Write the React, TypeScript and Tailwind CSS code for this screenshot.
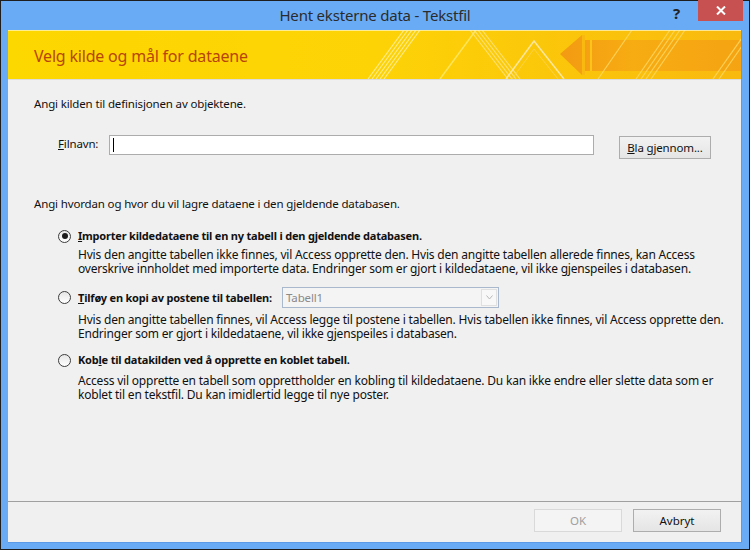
import React from "react";

function Radio({ checked }: { checked?: boolean }) {
  return (
    <span className="w-[13px] h-[13px] rounded-full border border-[#3c3c3c] bg-gradient-to-b from-[#e6e6e6] to-white flex items-center justify-center shrink-0">
      {checked && <span className="w-[6px] h-[6px] rounded-full bg-[#1a1a1a]" />}
    </span>
  );
}

function HeaderArt() {
  return (
    <svg width="734" height="49" viewBox="0 0 734 49" className="absolute inset-0">
      <defs>
        <linearGradient id="bg" x1="0" y1="0" x2="1" y2="0">
          <stop offset="0" stopColor="#fdd700" />
          <stop offset="0.5" stopColor="#fdd306" />
          <stop offset="1" stopColor="#f9b90f" />
        </linearGradient>
        <linearGradient id="arrow" x1="0" y1="0" x2="1" y2="0">
          <stop offset="0" stopColor="#f39a13" />
          <stop offset="0.4" stopColor="#f7ac12" />
          <stop offset="1" stopColor="#f5a312" />
        </linearGradient>
      </defs>
      <rect width="734" height="49" fill="url(#bg)" />
      {/* left fan of light stripes */}
      <g stroke="#fff0a0" strokeWidth="1.2" opacity="0.85">
        <line x1="360" y1="49" x2="396" y2="0" />
        <line x1="364" y1="49" x2="400" y2="0" />
        <line x1="368" y1="49" x2="404" y2="0" />
        <line x1="372" y1="49" x2="408" y2="0" />
        <line x1="376" y1="49" x2="412" y2="0" />
      </g>
      <line x1="432" y1="49" x2="468" y2="0" stroke="#ffe55a" strokeWidth="1.5" />
      {/* backslash stripes */}
      <g stroke="#fde37a" strokeWidth="1.2" opacity="0.9">
        <line x1="462" y1="0" x2="500" y2="49" />
        <line x1="466" y1="0" x2="504" y2="49" />
        <line x1="470" y1="0" x2="508" y2="49" />
        <line x1="474" y1="0" x2="512" y2="49" />
      </g>
      {/* chevron */}
      <polyline points="498,49 526,11 556,49" fill="none" stroke="#fde6a0" strokeWidth="1.5" />
      <polyline points="504,49 526,19 550,49" fill="none" stroke="#fcd96a" strokeWidth="1" opacity="0.6" />
      {/* arrow */}
      <polygon points="552,24 574,5 574,10 734,10 734,41 574,41 574,45" fill="url(#arrow)" />
      <rect x="574" y="5" width="3" height="40" fill="#f9b90f" />
      <rect x="582" y="10" width="2" height="31" fill="#fbc41a" />
      {/* right stripes */}
      <g stroke="#fdd860" strokeWidth="1.2" opacity="0.85">
        <line x1="590" y1="49" x2="624" y2="0" />
        <line x1="628" y1="49" x2="662" y2="0" />
        <line x1="633" y1="49" x2="667" y2="0" />
        <line x1="638" y1="49" x2="672" y2="0" />
        <line x1="643" y1="49" x2="677" y2="0" />
        <line x1="705" y1="49" x2="734" y2="8" />
        <line x1="711" y1="49" x2="734" y2="16" />
      </g>
      <line x1="0" y1="0" x2="734" y2="0" stroke="#fff6c0" strokeWidth="1.5" />
    </svg>
  );
}

export default function App() {
  const font = "font-['Noto_Sans','Liberation_Sans',sans-serif]";
  return (
    <div className={`w-[750px] h-[550px] bg-[#6aabf5] border border-[#1e1e1e] flex flex-col ${font}`}>
      {/* Title bar */}
      <div className="h-[29px] relative flex items-center justify-center shrink-0">
        <span className="text-[15px] text-[#2b2b2b] -mt-[1px] tracking-[-0.2px]">Hent eksterne data - Tekstfil</span>
        <span className="absolute left-[672px] top-[1px] text-[15px] font-bold text-[#222]">?</span>
        <div className="absolute left-[697px] top-[-1px] w-[45px] h-[21px] bg-[#c75050] flex items-center justify-center">
          <svg width="10" height="9" viewBox="0 0 10 9">
            <path d="M1 0.5 L9 8.5 M9 0.5 L1 8.5" stroke="#fff" strokeWidth="2" />
          </svg>
        </div>
      </div>

      {/* Client area */}
      <div className="mx-[7px] mb-[6px] flex-1 bg-[#f0f0f0] flex flex-col border-r border-b border-[#5b9ae6]">
        {/* Banner */}
        <div className="h-[49px] relative shrink-0 overflow-hidden">
          <HeaderArt />
          <div className="relative pl-[26px] pt-[14px] text-[16px] tracking-[-0.2px] text-[#b74509]">Velg kilde og mål for dataene</div>
        </div>
        <div className="h-[1px] bg-[#dcdcdc]" />

        {/* Body */}
        <div className="flex-1 text-[11.5px] tracking-[-0.15px] text-[#111] leading-[14px]">
          <div className="pl-[26px] pt-[17px]">Angi kilden til definisjonen av objektene.</div>

          <div className="flex items-start pt-[24px]">
            <span className="ml-[50px] w-[51px] pt-[2px]"><u>F</u>ilnavn:</span>
            <div className="w-[485px] h-[20px] bg-white border border-[#acacac] flex items-center pl-[3px]">
              <span className="w-[1px] h-[14px] bg-black" />
            </div>
            <button className="ml-[25px] mt-[1px] w-[92px] h-[23px] border border-[#adadad] bg-gradient-to-b from-[#f2f2f2] to-[#e5e5e5] text-[11.5px] text-[#111]">
              <u>B</u>la gjennom...
            </button>
          </div>

          <div className="pl-[26px] pt-[38px]">Angi hvordan og hvor du vil lagre dataene i den gjeldende databasen.</div>

          {/* Option 1 */}
          <div className="pl-[50px] pt-[18px] flex items-center gap-[7px]">
            <Radio checked />
            <span className="font-bold text-[11px] tracking-[-0.2px]"><u>I</u>mporter kildedataene til en ny tabell i den gjeldende databasen.</span>
          </div>
          <div className="pl-[70px] pt-[5px] whitespace-nowrap text-[12px] tracking-[-0.2px]">
            <div>Hvis den angitte tabellen ikke finnes, vil Access opprette den. Hvis den angitte tabellen allerede finnes, kan Access</div>
            <div>overskrive innholdet med importerte data. Endringer som er gjort i kildedataene, vil ikke gjenspeiles i databasen.</div>
          </div>

          {/* Option 2 */}
          <div className="pl-[50px] pt-[11px] flex items-center gap-[7px]">
            <Radio />
            <span className="font-bold text-[11px] tracking-[-0.2px] w-[197px] whitespace-nowrap"><u>T</u>ilføy en kopi av postene til tabellen:</span>
            <div className="w-[217px] h-[21px] border border-[#a9b8cc] bg-[#f4f4f4] flex items-center justify-between pl-[3px] pr-[1px]">
              <span className="text-[#8a8a8a]">Tabell1</span>
              <span className="w-[16px] h-[17px] border border-[#e0e0e0] bg-[#f8f8f8] flex items-center justify-center">
                <svg width="7" height="5" viewBox="0 0 7 5">
                  <path d="M0.5 0.5 L3.5 4 L6.5 0.5" fill="none" stroke="#b8b8b8" strokeWidth="1" />
                </svg>
              </span>
            </div>
          </div>
          <div className="pl-[70px] pt-[5px] whitespace-nowrap text-[12px] tracking-[-0.2px]">
            <div>Hvis den angitte tabellen finnes, vil Access legge til postene i tabellen. Hvis tabellen ikke finnes, vil Access opprette den.</div>
            <div>Endringer som er gjort i kildedataene, vil ikke gjenspeiles i databasen.</div>
          </div>

          {/* Option 3 */}
          <div className="pl-[50px] pt-[12px] flex items-center gap-[7px]">
            <Radio />
            <span className="font-bold text-[11px] tracking-[-0.2px]">Kob<u>l</u>e til datakilden ved å opprette en koblet tabell.</span>
          </div>
          <div className="pl-[70px] pt-[7px] whitespace-nowrap text-[12px] tracking-[-0.2px] leading-[13.5px]">
            <div>Access vil opprette en tabell som opprettholder en kobling til kildedataene. Du kan ikke endre eller slette data som er</div>
            <div>koblet til en tekstfil. Du kan imidlertid legge til nye poster.</div>
          </div>
        </div>

        {/* Footer */}
        <div className="h-[1px] bg-[#a0a0a0]" />
        <div className="h-[40px] flex items-start justify-end gap-[11px] pt-[7px] pr-[20px] text-[11.5px]">
          <button className="w-[88px] h-[23px] border border-[#d9d9d9] bg-[#f4f4f4] text-[#a0a0a0]">OK</button>
          <button className="w-[88px] h-[23px] border border-[#adadad] bg-gradient-to-b from-[#f2f2f2] to-[#e5e5e5] text-[#111]">Avbryt</button>
        </div>
      </div>
    </div>
  );
}
